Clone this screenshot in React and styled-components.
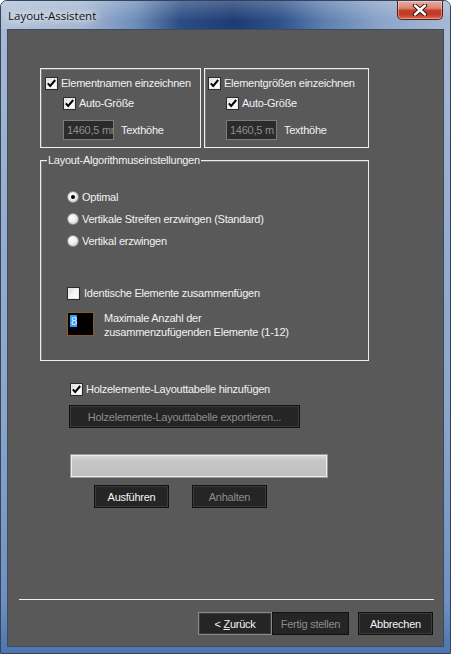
import React from 'react';
import styled, { createGlobalStyle } from 'styled-components';

const Global = createGlobalStyle`
  html, body { margin: 0; padding: 0; background: #ffffff; }
  body {
    width: 451px; height: 654px; overflow: hidden;
    font-family: "Liberation Sans", Arial, sans-serif;
  }
  * { box-sizing: border-box; }
`;

const Window = styled.div`
  width: 451px;
  height: 654px;
  display: flex;
  flex-direction: column;
  border: 1px solid #34445c;
  border-radius: 7px 7px 0 0;
  overflow: hidden;
  padding: 0 6px 6px;
  background: linear-gradient(180deg, #a9bbd4 0px, #9ab0ce 160px, #8aa5c9 420px, #6f90c0 600px, #4d74ae 100%);
`;

const TitleBar = styled.div`
  height: 28px;
  margin: 0 -6px;
  padding: 0 7px 0 7px;
  display: flex;
  justify-content: space-between;
  align-items: flex-start;
  background:
    linear-gradient(180deg, rgba(255,255,255,0.22), rgba(255,255,255,0) 70%),
    linear-gradient(90deg, #b3c2d8 0%, #a3b6d1 18%, #6f8dba 30%, #2c4d84 40%, #1d3c73 52%, #2f5189 62%, #5e7fb0 72%, #8aa3c8 84%, #a6b9d3 100%);
`;

const Title = styled.span`
  margin-top: 7px;
  font-family: "Open Sans", "Noto Sans", sans-serif;
  font-size: 11.5px;
  line-height: 15px;
  color: #111;
  text-shadow: 0 0 6px rgba(255,255,255,0.95), 0 0 10px rgba(255,255,255,0.85), 0 0 14px rgba(255,255,255,0.6);
`;

const CloseButton = styled.div`
  width: 46px;
  height: 19px;
  display: flex;
  align-items: center;
  justify-content: center;
  border: 1px solid #5b1d16;
  border-top: none;
  border-radius: 0 0 5px 5px;
  background: linear-gradient(180deg, #e9ad9f 0%, #d98473 40%, #c3402d 52%, #c13b28 75%, #dc6a4d 100%);
  box-shadow: inset 0 0 0 1px rgba(255,255,255,0.35);
`;

const Client = styled.div`
  flex: 1;
  display: flex;
  flex-direction: column;
  border: 1px solid #3d4b60;
  background: #595959;
  color: #f2f2f2;
  font-size: 11px;
  letter-spacing: -0.25px;
`;

const Content = styled.div`
  padding: 38px 0 0 32px;
  display: flex;
  flex-direction: column;
  align-items: flex-start;
`;

const GroupRow = styled.div`
  display: flex;
  gap: 3px;
`;

const Group = styled.div`
  width: ${p => p.$w}px;
  height: ${p => p.$h}px;
  border: 1px solid #ededed;
  box-shadow: inset 1px 1px 0 #7a7a7a;
  padding: ${p => p.$pt || 0}px 0 0 ${p => p.$pl || 0}px;
  margin-top: ${p => p.$mt || 0}px;
  display: flex;
  flex-direction: column;
  align-items: flex-start;
`;

const Legend = styled.span`
  margin: -8px 0 0 6px;
  padding: 0 1px;
  background: #595959;
  line-height: 14px;
  white-space: nowrap;
`;

const Row = styled.div`
  display: flex;
  align-items: center;
  gap: ${p => p.$gap ?? 3}px;
  height: ${p => p.$h || 13}px;
  margin-top: ${p => p.$mt || 0}px;
  margin-left: ${p => p.$ml || 0}px;
  white-space: nowrap;
`;

const Label = styled.span`
  line-height: 13px;
`;

const Box = styled.span`
  width: 13px;
  height: 13px;
  flex: none;
  border: 1px solid #2c2c2c;
  background: linear-gradient(135deg, #d2d2d2 0%, #f4f4f4 45%, #ffffff 100%);
  box-shadow: inset 0 0 0 1px #e9e9e9;
  display: flex;
  align-items: center;
  justify-content: center;
`;

const RadioCircle = styled.span`
  width: 12px;
  height: 12px;
  flex: none;
  border-radius: 50%;
  border: 1px solid #8c8c8c;
  background: radial-gradient(circle at 40% 35%, #ffffff 0%, #f0f0f0 40%, #c9c9c9 100%);
  display: flex;
  align-items: center;
  justify-content: center;
`;

const Dot = styled.span`
  width: 4px;
  height: 4px;
  border-radius: 50%;
  background: #000;
`;

const TextBox = styled.div`
  width: 51px;
  height: 20px;
  border: 1px solid #7b7b7b;
  background: #2b2b2b;
  color: #8e8e8e;
  padding-left: 3px;
  line-height: 18px;
  overflow: hidden;
  white-space: nowrap;
  flex: none;
`;

const SpinRow = styled.div`
  display: flex;
  align-items: flex-start;
  margin-top: 12px;
  margin-left: 26px;
`;

const SpinBox = styled.div`
  width: 27px;
  height: 24px;
  flex: none;
  background: #000;
  border: 1px solid #8b5a2b;
  padding: 2px 0 0 2px;
`;

const Selected = styled.span`
  display: inline-block;
  background: #3399ff;
  color: #e8f2ff;
  line-height: 12px;
  padding: 0 0 0 1px;
  width: 7px;
`;

const Multi = styled.div`
  margin: -1px 0 0 10px;
  line-height: 14px;
`;

const Button = styled.div`
  width: ${p => p.$w}px;
  height: ${p => p.$h || 23}px;
  display: flex;
  align-items: center;
  justify-content: center;
  background: #252525;
  border: 1px solid ${p => (p.$focus ? '#8a8a8a' : '#111111')};
  box-shadow: ${p => (p.$flat ? 'none' : 'inset 0 0 0 1px #3b3b3b')};
  color: ${p => (p.$disabled ? '#8d8d8d' : '#f4f4f4')};
  margin-top: ${p => p.$mt || 0}px;
  margin-left: ${p => p.$ml || 0}px;
  white-space: nowrap;
  flex: none;
`;

const Progress = styled.div`
  width: 258px;
  height: 24px;
  margin: 26px 0 0 30px;
  border: 1px solid #9b9b9b;
  background: linear-gradient(180deg, #dcdcdc 0%, #c6c6c6 25%, #c0c0c0 100%);
  box-shadow: inset 0 0 0 1px #ececec;
`;

const ButtonRow = styled.div`
  display: flex;
  gap: 23px;
  margin: 7px 0 0 54px;
`;

const Footer = styled.div`
  margin-top: auto;
  padding: 0 10px 11px 11px;
  display: flex;
  flex-direction: column;
`;

const Separator = styled.div`
  height: 1px;
  width: 415px;
  background: #f0f0f0;
`;

const FooterButtons = styled.div`
  display: flex;
  justify-content: flex-end;
  margin-top: 12px;
`;

const U = styled.span`
  text-decoration: underline;
`;

const Check = () => (
  <svg width="9" height="9" viewBox="0 0 9 9">
    <path d="M0.8 4.3 L3.2 7 L8.2 1" fill="none" stroke="#000" strokeWidth="2" />
  </svg>
);

const CheckBox = ({ checked }) => <Box>{checked && <Check />}</Box>;

const Radio = ({ checked }) => <RadioCircle>{checked && <Dot />}</RadioCircle>;

const CloseX = () => (
  <svg width="16" height="12" viewBox="0 0 16 12">
    <path d="M3 1.5 L13 10.5 M13 1.5 L3 10.5" stroke="#3a1510" strokeWidth="4.4" strokeLinecap="round" />
    <path d="M3 1.5 L13 10.5 M13 1.5 L3 10.5" stroke="#ffffff" strokeWidth="2.4" strokeLinecap="round" />
  </svg>
);

const SizeGroup = ({ title, w, pl, value }) => (
  <Group $w={w} $h={80} $pt={8} $pl={pl}>
    <Row>
      <CheckBox checked />
      <Label>{title}</Label>
    </Row>
    <Row $mt={7} $ml={18}>
      <CheckBox checked />
      <Label>Auto-Größe</Label>
    </Row>
    <Row $mt={10} $ml={18} $h={20} $gap={7}>
      <TextBox>{value}</TextBox>
      <Label>Texthöhe</Label>
    </Row>
  </Group>
);

export default function App() {
  return (
    <>
      <Global />
      <Window>
        <TitleBar>
          <Title>Layout-Assistent</Title>
          <CloseButton>
            <CloseX />
          </CloseButton>
        </TitleBar>
        <Client>
          <Content>
            <GroupRow>
              <SizeGroup title="Elementnamen einzeichnen" w={161} pl={4} value="1460,5 mm" />
              <SizeGroup title="Elementgrößen einzeichnen" w={165} pl={3} value="1460,5 m" />
            </GroupRow>
            <Group $w={329} $h={201} $mt={12}>
              <Legend>Layout-Algorithmuseinstellungen</Legend>
              <Row $mt={19} $ml={26} $h={22}>
                <Radio checked />
                <Label>Optimal</Label>
              </Row>
              <Row $ml={26} $h={22}>
                <Radio />
                <Label>Vertikale Streifen erzwingen (Standard)</Label>
              </Row>
              <Row $ml={26} $h={22}>
                <Radio />
                <Label>Vertikal erzwingen</Label>
              </Row>
              <Row $mt={35} $ml={26} $gap={4}>
                <CheckBox />
                <Label>Identische Elemente zusammenfügen</Label>
              </Row>
              <SpinRow>
                <SpinBox>
                  <Selected>8</Selected>
                </SpinBox>
                <Multi>
                  Maximale Anzahl der
                  <br />
                  zusammenzufügenden Elemente (1-12)
                </Multi>
              </SpinRow>
            </Group>
            <Row $mt={22} $ml={30}>
              <CheckBox checked />
              <Label>Holzelemente-Layouttabelle hinzufügen</Label>
            </Row>
            <Button $w={231} $mt={9} $ml={29} $disabled>
              Holzelemente-Layouttabelle exportieren...
            </Button>
            <Progress />
            <ButtonRow>
              <Button $w={75}>Ausführen</Button>
              <Button $w={75} $disabled>Anhalten</Button>
            </ButtonRow>
          </Content>
          <Footer>
            <Separator />
            <FooterButtons>
              <Button $w={74} $focus>
                &lt;&nbsp;<U>Z</U>urück
              </Button>
              <Button $w={77} $disabled $flat>
                Fertig stellen
              </Button>
              <Button $w={75} $ml={9}>Abbrechen</Button>
            </FooterButtons>
          </Footer>
        </Client>
      </Window>
    </>
  );
}
